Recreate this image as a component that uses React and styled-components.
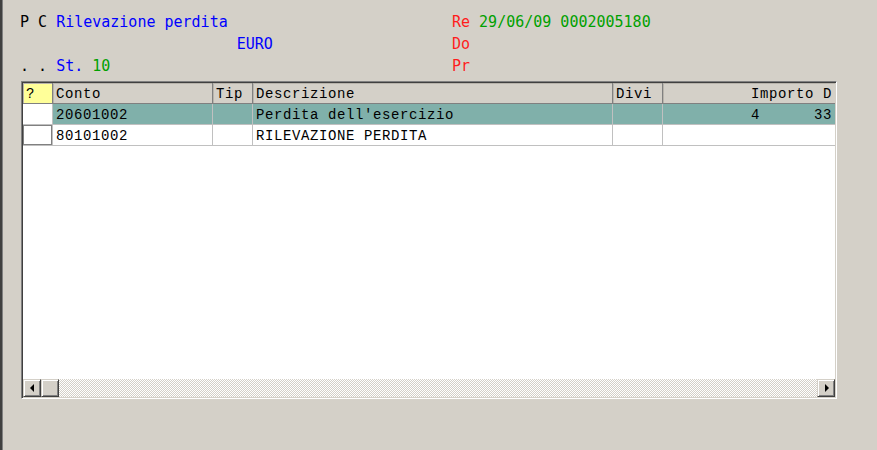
import React from "react";
import styled, { createGlobalStyle } from "styled-components";

const columns = [
  { key: "sel", title: "?", width: 30 },
  { key: "conto", title: "Conto", width: 160 },
  { key: "tip", title: "Tip", width: 40 },
  { key: "descr", title: "Descrizione", width: 360 },
  { key: "divi", title: "Divi", width: 50 },
  { key: "importo", title: "Importo D", width: 172, right: true },
];

const rows = [
  { conto: "20601002", tip: "", descr: "Perdita dell'esercizio", divi: "", importo: "4      33", selected: true },
  { conto: "80101002", tip: "", descr: "RILEVAZIONE PERDITA", divi: "", importo: "", current: true },
];

const GlobalStyle = createGlobalStyle`
  html, body {
    margin: 0;
    padding: 0;
    background: #d4d0c8;
  }
`;

const Window = styled.div`
  width: 875px;
  height: 450px;
  background: #d4d0c8;
  border-left: 2px solid #404040;
  box-shadow: inset 1px 0 #808080;
  padding: 11px 0 0 18px;
  box-sizing: border-box;
  display: flex;
  flex-direction: column;
  overflow: hidden;
`;

const InfoArea = styled.div`
  display: grid;
  grid-template-columns: 432px auto;
  font-family: "DejaVu Sans Mono", monospace;
  font-size: 15px;
  line-height: 22px;
  white-space: pre;
`;

const InfoCol = styled.div`
  display: flex;
  flex-direction: column;
`;

const InfoLine = styled.div`
  height: 22px;
`;

const Txt = styled.span`
  color: ${(p) => p.$color || "#000000"};
`;

const Frame = styled.div`
  margin-top: 4px;
  margin-left: 1px;
  width: 816px;
  height: 318px;
  box-sizing: border-box;
  border: 1px solid;
  border-color: #808080 #ffffff #ffffff #808080;
  box-shadow: inset 1px 1px #404040, inset -1px -1px #d4d0c8;
  padding: 1px;
  display: flex;
  flex-direction: column;
`;

const Table = styled.div`
  flex: 1;
  background: #ffffff;
  display: flex;
  flex-direction: column;
  overflow: hidden;
  font-family: "Liberation Mono", "Courier New", monospace;
  font-size: 14px;
  letter-spacing: 0.6px;
  color: #000000;
`;

const Row = styled.div`
  display: flex;
  height: 21px;
  flex-shrink: 0;
`;

const HeadCell = styled.div`
  width: ${(p) => p.$w}px;
  flex-shrink: 0;
  box-sizing: border-box;
  height: 21px;
  padding: 1px 3px 0;
  display: flex;
  align-items: center;
  justify-content: ${(p) => (p.$right ? "flex-end" : "flex-start")};
  background: ${(p) => (p.$marker ? "#ffff99" : "#d4d0c8")};
  border-right: 1px solid #808080;
  border-bottom: 1px solid #808080;
  box-shadow: inset 1px 1px #b8b4ac;
  overflow: hidden;
  white-space: pre;
  &:last-child {
    border-right: none;
  }
`;

const Cell = styled.div`
  width: ${(p) => p.$w}px;
  flex-shrink: 0;
  box-sizing: border-box;
  height: 21px;
  padding: 1px 3px 0;
  display: flex;
  align-items: center;
  justify-content: ${(p) => (p.$right ? "flex-end" : "flex-start")};
  background: ${(p) => (p.$selected ? "#80b0aa" : "#ffffff")};
  border-right: 1px solid #c0c0c0;
  border-bottom: 1px solid #c0c0c0;
  box-shadow: ${(p) => (p.$current ? "inset 0 0 0 1px #808080" : "none")};
  overflow: hidden;
  white-space: pre;
  &:last-child {
    border-right: none;
  }
`;

const Fill = styled.div`
  flex: 1;
  background: #ffffff;
`;

const ScrollBar = styled.div`
  height: 18px;
  flex-shrink: 0;
  display: flex;
  background-color: #ffffff;
  background-image: conic-gradient(
    #d4d0c8 25%,
    #ffffff 0 50%,
    #d4d0c8 0 75%,
    #ffffff 0
  );
  background-size: 2px 2px;
`;

const ScrollButton = styled.div`
  width: 18px;
  height: 18px;
  box-sizing: border-box;
  background: #d4d0c8;
  border: 1px solid;
  border-color: #d4d0c8 #404040 #404040 #d4d0c8;
  box-shadow: inset 1px 1px #ffffff, inset -1px -1px #808080;
  display: flex;
  align-items: center;
  justify-content: center;
  margin-left: ${(p) => (p.$push ? "auto" : "0")};
`;

const Arrow = styled.span`
  width: 0;
  height: 0;
  border-top: 4px solid transparent;
  border-bottom: 4px solid transparent;
  ${(p) =>
    p.$dir === "left"
      ? "border-right: 4px solid #000000; margin-right: 1px;"
      : "border-left: 4px solid #000000; margin-left: 1px;"}
`;

export default function App() {
  return (
    <>
      <GlobalStyle />
      <Window>
        <InfoArea>
          <InfoCol>
            <InfoLine>
              <Txt>P C </Txt>
              <Txt $color="#0000ff">Rilevazione perdita</Txt>
            </InfoLine>
            <InfoLine>
              <Txt $color="#0000ff">{"                        EURO"}</Txt>
            </InfoLine>
            <InfoLine>
              <Txt>. . </Txt>
              <Txt $color="#0000ff">St. </Txt>
              <Txt $color="#00a000">10</Txt>
            </InfoLine>
          </InfoCol>
          <InfoCol>
            <InfoLine>
              <Txt $color="#ff1c1c">Re </Txt>
              <Txt $color="#00a000">29/06/09 0002005180</Txt>
            </InfoLine>
            <InfoLine>
              <Txt $color="#ff1c1c">Do</Txt>
            </InfoLine>
            <InfoLine>
              <Txt $color="#ff1c1c">Pr</Txt>
            </InfoLine>
          </InfoCol>
        </InfoArea>

        <Frame>
          <Table>
            <Row>
              {columns.map((c) => (
                <HeadCell
                  key={c.key}
                  $w={c.width}
                  $right={c.right}
                  $marker={c.key === "sel"}
                >
                  {c.title}
                </HeadCell>
              ))}
            </Row>
            {rows.map((r, i) => (
              <Row key={i}>
                {columns.map((c) => (
                  <Cell
                    key={c.key}
                    $w={c.width}
                    $right={c.right}
                    $selected={r.selected && c.key !== "sel"}
                    $current={r.current && c.key === "sel"}
                  >
                    {c.key === "sel" ? "" : r[c.key]}
                  </Cell>
                ))}
              </Row>
            ))}
            <Fill />
            <ScrollBar>
              <ScrollButton>
                <Arrow $dir="left" />
              </ScrollButton>
              <ScrollButton />
              <ScrollButton $push>
                <Arrow $dir="right" />
              </ScrollButton>
            </ScrollBar>
          </Table>
        </Frame>
      </Window>
    </>
  );
}
